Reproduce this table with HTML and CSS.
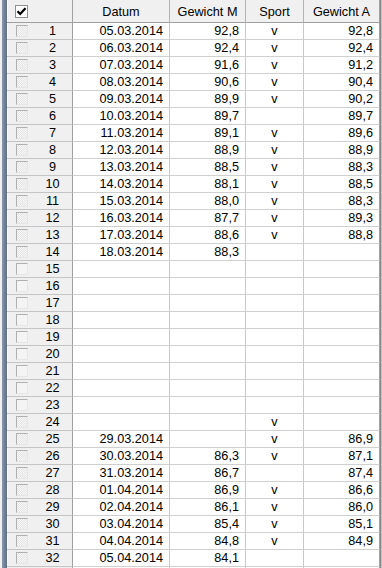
FILE: index.html
```html
<!DOCTYPE html>
<html>
<head>
<meta charset="utf-8">
<link rel="stylesheet" href="styles.css">
</head>
<body>
<div class="window">
  <div class="frame-left"></div>
  <div class="grid">
    <div class="row head">
      <div class="ind"><span class="hbox"><svg width="11" height="11" viewBox="0 0 11 11"><path d="M1.5 5.2 L4.2 8 L9.5 2.2" fill="none" stroke="#000" stroke-width="2.2"/></svg></span></div>
      <div class="c c-date">Datum</div>
      <div class="c c-gm">Gewicht M</div>
      <div class="c c-sp">Sport</div>
      <div class="c c-ga">Gewicht A</div>
    </div>
    <div id="rows"></div>
  </div>
  <div class="frame-right"></div>
</div>
<script src="app.js"></script>
</body>
</html>
```
FILE: app.js
```js
var data = [
  ["05.03.2014","92,8","v","92,8"],
  ["06.03.2014","92,4","v","92,4"],
  ["07.03.2014","91,6","v","91,2"],
  ["08.03.2014","90,6","v","90,4"],
  ["09.03.2014","89,9","v","90,2"],
  ["10.03.2014","89,7","","89,7"],
  ["11.03.2014","89,1","v","89,6"],
  ["12.03.2014","88,9","v","88,9"],
  ["13.03.2014","88,5","v","88,3"],
  ["14.03.2014","88,1","v","88,5"],
  ["15.03.2014","88,0","v","88,3"],
  ["16.03.2014","87,7","v","89,3"],
  ["17.03.2014","88,6","v","88,8"],
  ["18.03.2014","88,3","",""],
  ["","","",""],["","","",""],["","","",""],["","","",""],["","","",""],
  ["","","",""],["","","",""],["","","",""],["","","",""],
  ["","","v",""],
  ["29.03.2014","","v","86,9"],
  ["30.03.2014","86,3","v","87,1"],
  ["31.03.2014","86,7","","87,4"],
  ["01.04.2014","86,9","v","86,6"],
  ["02.04.2014","86,1","v","86,0"],
  ["03.04.2014","85,4","v","85,1"],
  ["04.04.2014","84,8","v","84,9"],
  ["05.04.2014","84,1","",""],
  ["","","",""]
];
var html = "";
data.forEach(function (r, i) {
  var filled = r.join("") !== "";
  var label = i < 32 ? String(i + 1) : "";
  html += '<div class="row">' +
    '<div class="ind"><span class="box' + (filled ? ' dotted' : '') + '"></span><span class="num">' + label + '</span></div>' +
    '<div class="c c-date">' + r[0] + '</div>' +
    '<div class="c c-gm">' + r[1] + '</div>' +
    '<div class="c c-sp">' + r[2] + '</div>' +
    '<div class="c c-ga">' + r[3] + '</div>' +
    '</div>';
});
document.getElementById("rows").innerHTML = html;
```
FILE: styles.css
```css
html, body {
  margin: 0;
  padding: 0;
  background: #f0f0f0;
  overflow: hidden;
}
body {
  width: 382px;
  height: 568px;
  font-family: "Liberation Sans", Arial, sans-serif;
  font-size: 12.7px;
  color: #000;
}
.window {
  display: flex;
  height: 568px;
}
.frame-left {
  width: 5px;
  margin-left: 2px;
  background: linear-gradient(to right, #8a98ad, #5d6d84);
  flex: none;
}
.frame-right {
  width: 2px;
  flex: none;
  background: linear-gradient(to right, #6b6b6b, #e0e0e0);
}
.grid {
  width: 373px;
  flex: none;
  background: #fff;
}
.row {
  display: grid;
  grid-template-columns: 66px 97px 76px 58px 76px;
  height: 17px;
  box-sizing: border-box;
}
.row > div {
  box-sizing: border-box;
  border-right: 1px solid #c8c8c8;
  border-bottom: 1px solid #d0d0d0;
  display: flex;
  align-items: center;
  white-space: nowrap;
  overflow: hidden;
}
.row.head {
  height: 23px;
  background: #f0f0f0;
}
.row.head > div {
  border-bottom-color: #a0a0a0;
  border-right-color: #b4b4b4;
  justify-content: center;
  padding-top: 1px;
}
.row.head > .ind {
  justify-content: flex-start;
  padding-top: 0;
}
.ind {
  background: #f0f0f0;
  box-shadow: inset 1px 0 0 #ffffff;
  border-right-color: #a0a0a0 !important;
}
.row:not(.head) .ind {
  border-bottom-color: #c4c4c4;
}
.hbox {
  margin-left: 8px;
  width: 13px;
  height: 13px;
  flex: none;
  box-sizing: border-box;
  border: 1px solid #8e8f8f;
  background: #fdfdfd;
  display: flex;
  align-items: center;
  justify-content: center;
}
.hbox svg { display: block; }
.box {
  width: 12px;
  height: 12px;
  box-sizing: border-box;
  margin-left: 9px;
  border-top: 1px solid #b0b0b0;
  border-left: 1px solid #b0b0b0;
  border-right: 1px solid #e6e6e6;
  border-bottom: 1px solid #e6e6e6;
  background: #f4f4f4;
  flex: none;
}
.box.dotted {
  background-color: #f7f7f7;
  background-image:
    linear-gradient(45deg, #e4e4e4 25%, transparent 25%, transparent 75%, #e4e4e4 75%),
    linear-gradient(45deg, #e4e4e4 25%, transparent 25%, transparent 75%, #e4e4e4 75%);
  background-size: 2px 2px;
  background-position: 0 0, 1px 1px;
}
.num {
  width: 39px;
  margin-left: 5px;
  text-align: center;
}
.c-date, .c-gm, .c-ga {
  justify-content: flex-end;
  padding-right: 6px;
}
.c-sp {
  justify-content: center;
}
.row.head .c-date, .row.head .c-gm, .row.head .c-ga {
  padding-right: 0;
}
.c-ga {
  border-right-color: #a0a0a0 !important;
}
```
